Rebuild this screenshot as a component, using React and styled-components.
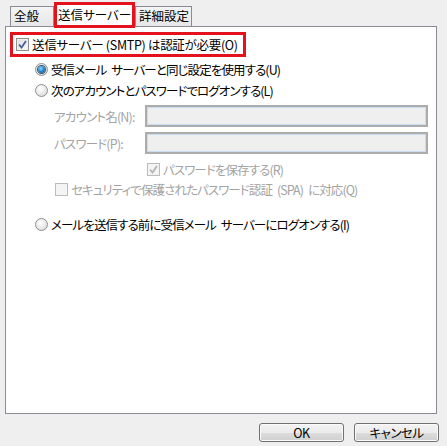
import React from 'react'
import styled, { createGlobalStyle, css } from 'styled-components'

const Global = createGlobalStyle`
  html, body { margin: 0; padding: 0; }
  body {
    background: #efefef;
    font-family: "Noto Sans CJK JP", "Liberation Sans", sans-serif;
    font-size: 12.5px;
    font-feature-settings: "palt";
    color: #000;
  }
`

const Dialog = styled.div`
  width: 447px;
  height: 446px;
  display: flex;
  flex-direction: column;
  background: #efefef;
`

const TabStrip = styled.div`
  display: flex;
  align-items: flex-end;
  height: 27px;
  padding-left: 10px;
  position: relative;
  z-index: 2;
`

const Tab = styled.div`
  box-sizing: border-box;
  height: 20px;
  width: ${p => p.$w}px;
  padding-left: 3px;
  line-height: 18px;
  border: 1px solid #898c95;
  border-bottom: none;
  background: linear-gradient(#f4f4f4, #e6e6e6);
  white-space: nowrap;
  margin-bottom: 1px;
  ${p => p.$active && css`
    height: 26px;
    padding-left: 0;
    text-align: center;
    line-height: 20px;
    background: #fff;
    border: 3px solid #e3121c;
    margin-bottom: -1px;
  `}
`

const Panel = styled.div`
  box-sizing: border-box;
  margin: -1px 10px 0 5px;
  height: 388px;
  border: 1px solid #898c95;
  background: #fff;
  display: flex;
  flex-direction: column;
`

const Highlight = styled.div`
  box-sizing: border-box;
  margin: 5px 0 0 4px;
  width: 236px;
  height: 25px;
  border: 3px solid #e3121c;
  display: flex;
  align-items: center;
  padding-left: 3px;
  gap: 3px;
  letter-spacing: -0.3px;
  white-space: nowrap;
`

const Row = styled.label`
  display: flex;
  align-items: center;
  height: ${p => p.$h || 20}px;
  margin-top: ${p => p.$mt || 0}px;
  padding-left: ${p => p.$indent || 0}px;
  gap: 3px;
  letter-spacing: -0.9px;
  word-spacing: 3px;
  color: ${p => (p.$disabled ? '#a3a3a3' : '#000')};
  white-space: nowrap;
`

const Box = styled.span`
  box-sizing: border-box;
  width: 13px;
  height: 13px;
  flex: none;
  border: 1px solid ${p => (p.$disabled ? '#bcbcbc' : '#8e8f8f')};
  background: ${p => (p.$disabled ? '#f4f4f4' : 'linear-gradient(135deg, #dcdcdc, #fbfbfb)')};
  box-shadow: inset 0 0 0 1px ${p => (p.$disabled ? '#f4f4f4' : '#f0f0f0')};
  display: flex;
  align-items: center;
  justify-content: center;
`

const Radio = styled.span`
  box-sizing: border-box;
  width: 13px;
  height: 13px;
  flex: none;
  border-radius: 50%;
  border: 1px solid #8e8f8f;
  background: radial-gradient(circle at 40% 35%, #ffffff 0, #e6e6e6 60%, #cfcfcf 100%);
  display: flex;
  align-items: center;
  justify-content: center;
  &::after {
    content: '';
    width: 7px;
    height: 7px;
    border-radius: 50%;
    display: ${p => (p.$checked ? 'block' : 'none')};
    background: radial-gradient(circle at 40% 35%, #8fdcff 0, #2c8fd6 45%, #0d3e6f 100%);
    box-shadow: 0 0 0 1px #3a4f6a;
  }
`

const Check = ({ disabled }) => (
  <svg width="9" height="9" viewBox="0 0 9 9">
    <path
      d="M1 4.5 L3.5 7.5 L8 1"
      fill="none"
      stroke={disabled ? '#b4b4b4' : '#4a5d9a'}
      strokeWidth="1.8"
    />
  </svg>
)

const FieldRow = styled.div`
  display: flex;
  align-items: center;
  height: 22px;
  margin-top: ${p => p.$mt}px;
  padding-left: 48px;
`

const FieldLabel = styled.span`
  width: 91px;
  flex: none;
  letter-spacing: -0.8px;
  white-space: nowrap;
  color: #a3a3a3;
`

const Input = styled.div`
  box-sizing: border-box;
  width: 283px;
  height: 22px;
  border: 2px solid #acacac;
  box-shadow: inset 0 0 0 1px #c8ddf1;
  background: #efefef;
`

const Footer = styled.div`
  display: flex;
  justify-content: flex-end;
  gap: 10px;
  padding: 9px 8px 0 0;
`

const Button = styled.button`
  box-sizing: border-box;
  width: 85px;
  height: 19px;
  padding: 0;
  font: inherit;
  line-height: 16px;
  letter-spacing: -0.5px;
  border: 1px solid #707070;
  border-radius: 3px;
  background: linear-gradient(#f3f3f3 0, #ebebeb 50%, #dddddd 51%, #cfcfcf 100%);
  box-shadow: inset 0 0 0 1px #fbfbfb;
  color: #000;
`

export default function App() {
  return (
    <Dialog>
      <Global />
      <TabStrip>
        <Tab $w={44}>全般</Tab>
        <Tab $w={81} $active>送信サーバー</Tab>
        <Tab $w={57}>詳細設定</Tab>
      </TabStrip>
      <Panel>
        <Highlight>
          <Box><Check /></Box>
          <span>送信サーバー (SMTP) は認証が必要(O)</span>
        </Highlight>
        <Row $indent={29} $h={21} $mt={2}>
          <Radio $checked />
          <span>受信メール サーバーと同じ設定を使用する(U)</span>
        </Row>
        <Row $indent={29} $h={21}>
          <Radio />
          <span>次のアカウントとパスワードでログオンする(L)</span>
        </Row>
        <FieldRow $mt={4}>
          <FieldLabel>アカウント名(N):</FieldLabel>
          <Input />
        </FieldRow>
        <FieldRow $mt={5}>
          <FieldLabel>パスワード(P):</FieldLabel>
          <Input />
        </FieldRow>
        <Row $indent={141} $mt={5} $disabled>
          <Box $disabled><Check disabled /></Box>
          <span>パスワードを保存する(R)</span>
        </Row>
        <Row $indent={49} $disabled>
          <Box $disabled />
          <span>セキュリティで保護されたパスワード認証 (SPA) に対応(Q)</span>
        </Row>
        <Row $indent={29} $mt={15}>
          <Radio />
          <span>メールを送信する前に受信メール サーバーにログオンする(I)</span>
        </Row>
      </Panel>
      <Footer>
        <Button>OK</Button>
        <Button>キャンセル</Button>
      </Footer>
    </Dialog>
  )
}
